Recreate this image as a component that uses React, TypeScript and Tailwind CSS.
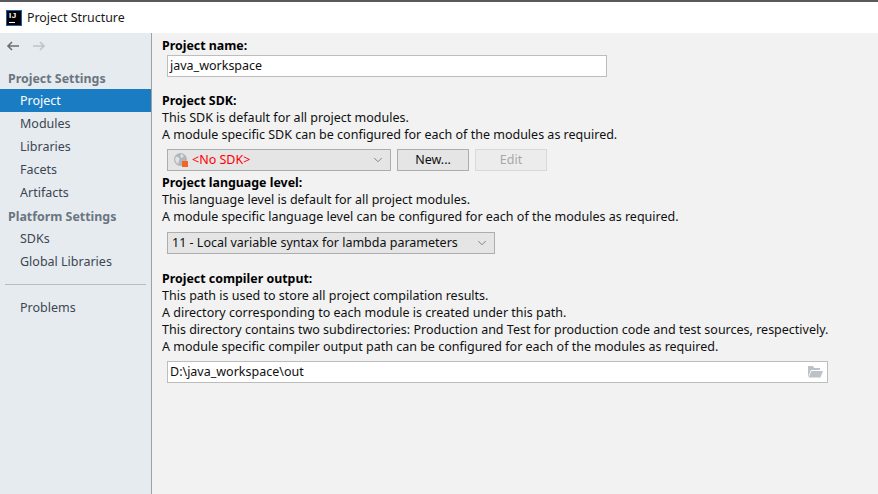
import { ChevronDown } from "lucide-react";

const font = { fontFamily: '"Noto Sans", "Open Sans", sans-serif' };

const sidebarGroups = [
  { title: "Project Settings", items: ["Project", "Modules", "Libraries", "Facets", "Artifacts"] },
  { title: "Platform Settings", items: ["SDKs", "Global Libraries"] },
];

function NavItem({ label, active }: { label: string; active?: boolean }) {
  return (
    <div className={`h-[23px] pl-5 leading-[23px] text-[12.5px] ${active ? "bg-[#1a7dc4] text-white" : "text-[#3c4650]"}`}>
      {label}
    </div>
  );
}

function Select({ width, children }: { width: string; children: React.ReactNode }) {
  return (
    <div className={`${width} h-[22px] flex items-center border border-[#adadad] bg-[#e5e5e5] pl-[4px] pr-[5px]`}>
      <div className="flex-1 flex items-center min-w-0">{children}</div>
      <ChevronDown size={14} strokeWidth={1.4} className="text-[#707070]" />
    </div>
  );
}

function Desc({ lines }: { lines: string[] }) {
  return (
    <>
      {lines.map((l) => (
        <div key={l} className="h-[17px] leading-[17px] text-[12.5px] text-[#101010] whitespace-nowrap">
          {l}
        </div>
      ))}
    </>
  );
}

function Heading({ children }: { children: React.ReactNode }) {
  return <div className="h-[17px] leading-[17px] text-[12.4px] font-bold text-black whitespace-nowrap">{children}</div>;
}

export default function App() {
  return (
    <div style={font} className="w-[878px] h-[494px] flex flex-col overflow-hidden bg-[#f2f2f2]">
      <div className="h-[33px] shrink-0 bg-white border-t-2 border-[#5a5a5a] flex items-center pl-[6px] gap-[5px]">
        <div className="w-[16px] h-[16px] bg-black border border-[#1c5fa8] relative shrink-0 mt-px">
          <span className="absolute left-[2px] top-[1px] font-['Liberation_Sans'] text-[8px] leading-[8px] tracking-[0.6px] font-bold text-white">IJ</span>
          <span className="absolute left-[2px] bottom-[2px] w-[6px] h-px bg-white" />
        </div>
        <span className="pt-px text-[12.4px] text-[#1a1a1a]">Project Structure</span>
      </div>
      <div className="flex-1 flex min-h-0">
        <div className="w-[152px] shrink-0 bg-[#e6ebf0] border-r border-[#a0a0a0]">
          <div className="h-[26px] flex items-center pl-[6px] gap-[12px]">
            <svg width="14" height="12" viewBox="0 0 14 12" fill="none" stroke="#6e6e6e" strokeWidth="1.6">
              <path d="M13 6H2M6 2L2 6l4 4" />
            </svg>
            <svg width="14" height="12" viewBox="0 0 14 12" fill="none" stroke="#c0c4c8" strokeWidth="1.6">
              <path d="M1 6h11M8 2l4 4-4 4" />
            </svg>
          </div>
          {sidebarGroups.map((g, i) => (
            <div key={g.title}>
              <div className={`h-[23px] pl-2 pt-px leading-[23px] text-[12.4px] font-bold text-[#6b7580] ${i === 0 ? "mt-[7px]" : ""}`}>
                {g.title}
              </div>
              {g.items.map((item) => (
                <NavItem key={item} label={item} active={item === "Project"} />
              ))}
            </div>
          ))}
          <div className="mx-[5px] mt-[11px] mb-[11px] h-px bg-[#b8bcc0]" />
          <NavItem label="Problems" />
        </div>
        <div className="flex-1 pl-[10px] pt-[4px]">
          <Heading>Project name:</Heading>
          <div className="ml-[5px] mt-[1px] w-[440px] h-[22px] border border-[#bdbdbd] bg-white pl-[2px] leading-[20px] text-[12.5px] text-[#101010]">
            java_workspace
          </div>
          <div className="mt-[15px]">
            <Heading>Project SDK:</Heading>
          </div>
          <Desc lines={["This SDK is default for all project modules.", "A module specific SDK can be configured for each of the modules as required."]} />
          <div className="ml-[5px] mt-[6px] flex gap-[6px]">
            <div>
              <Select width="w-[224px]">
                <svg width="17" height="17" viewBox="0 0 17 17" className="shrink-0 ml-px mr-[2px]">
                  <circle cx="7.5" cy="7.5" r="6.5" fill="#b0b6ba" />
                  <path d="M3 5c2-.5 3 .5 3.5 2S5 9.5 5.5 11 4 11.5 3 10 2 6 3 5zM8 2c2 .5 2.5 1.5 2.5 2.5S8.500 6 8 5.500 7 3 8 2z" fill="#dfe3e6" />
                  <rect x="9" y="9" width="6" height="6" fill="#f26522" />
                </svg>
                <span className="text-[12.5px] text-[#ff0000] whitespace-nowrap">&lt;No SDK&gt;</span>
              </Select>
            </div>
            <div className="w-[72px] h-[22px] border border-[#adadad] bg-[#e5e5e5] text-center leading-[19px] text-[12.5px] text-[#101010]">New...</div>
            <div className="w-[72px] h-[22px] border border-[#d9d9d9] bg-[#ececec] text-center leading-[19px] text-[12.5px] text-[#a8a8a8]">Edit</div>
          </div>
          <div className="mt-[3px]">
            <Heading>Project language level:</Heading>
          </div>
          <Desc lines={["This language level is default for all project modules.", "A module specific language level can be configured for each of the modules as required."]} />
          <div className="ml-[5px] mt-[7px]">
            <Select width="w-[328px]">
              <span className="text-[12.5px] text-[#101010] whitespace-nowrap">11 - Local variable syntax for lambda parameters</span>
            </Select>
          </div>
          <div className="mt-[16px]">
            <Heading>Project compiler output:</Heading>
          </div>
          <Desc
            lines={[
              "This path is used to store all project compilation results.",
              "A directory corresponding to each module is created under this path.",
              "This directory contains two subdirectories: Production and Test for production code and test sources, respectively.",
              "A module specific compiler output path can be configured for each of the modules as required.",
            ]}
          />
          <div className="ml-[5px] mt-[6px] w-[661px] h-[22px] border border-[#bdbdbd] bg-white pl-[2px] pr-[4px] flex items-center justify-between">
            <span className="text-[12.5px] text-[#101010]">D:\java_workspace\out</span>
            <svg width="15" height="12" viewBox="0 0 15 12">
              <path d="M0 0h5l1 2h6v2H3L0 11z" fill="#bcc2c7" />
              <path d="M3.500 5H15l-2.500 6.500H0.500z" fill="#bcc2c7" />
            </svg>
          </div>
        </div>
      </div>
    </div>
  );
}
